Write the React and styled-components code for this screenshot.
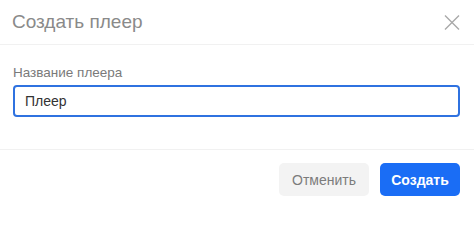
import React from "react";
import styled, { createGlobalStyle } from "styled-components";

const Global = createGlobalStyle`
  html, body { margin: 0; padding: 0; background: #fff; }
  body { font-family: "Liberation Sans", Arial, sans-serif; }
`;

const Dialog = styled.div`
  width: 474px;
  height: 208px;
  background: #fff;
  display: flex;
  flex-direction: column;
`;

const Header = styled.div`
  height: 45px;
  box-sizing: border-box;
  display: flex;
  align-items: center;
  justify-content: space-between;
  padding: 0 14px 0 12px;
  border-bottom: 1px solid #f1f1f1;
`;

const Title = styled.h2`
  margin: 0;
  font-size: 19px;
  font-weight: 400;
  color: #8a8a8a;
`;

const CloseButton = styled.button`
  border: 0;
  background: none;
  padding: 0;
  width: 16px;
  height: 16px;
  display: flex;
  align-items: center;
  justify-content: center;
  cursor: pointer;
  margin-top: 1px;
`;

const Body = styled.div`
  padding: 19px 14px 0 13px;
  height: 105px;
  box-sizing: border-box;
  border-bottom: 1px solid #f1f1f1;
`;

const Label = styled.label`
  display: block;
  font-size: 13.5px;
  line-height: 18px;
  color: #7a7a7a;
  margin-bottom: 3px;
`;

const Input = styled.input`
  display: block;
  width: 100%;
  height: 32px;
  box-sizing: border-box;
  border: 2px solid #2f72e0;
  border-radius: 4px;
  padding: 0 10px;
  font-family: inherit;
  font-size: 14px;
  color: #333;
  outline: none;
`;

const Footer = styled.div`
  flex: 1;
  display: flex;
  justify-content: flex-end;
  align-items: flex-start;
  gap: 11px;
  padding: 13px 14px 0 0;
`;

const Button = styled.button`
  height: 33px;
  width: ${(p) => (p.$primary ? "80px" : "90px")};
  padding: 0;
  border: 0;
  border-radius: 5px;
  font-family: inherit;
  font-size: 14px;
  font-weight: ${(p) => (p.$primary ? 700 : 400)};
  background: ${(p) => (p.$primary ? "#1a6df5" : "#f3f3f3")};
  color: ${(p) => (p.$primary ? "#fff" : "#7c7c7c")};
  cursor: pointer;
`;

export default function App() {
  return (
    <>
      <Global />
      <Dialog>
        <Header>
          <Title>Создать плеер</Title>
          <CloseButton aria-label="close">
            <svg width="16" height="15" viewBox="0 0 16 15">
              <path d="M1 0.5 L15 14.5 M15 0.5 L1 14.5" stroke="#a9a9a9" strokeWidth="1.4" fill="none" />
            </svg>
          </CloseButton>
        </Header>
        <Body>
          <Label>Название плеера</Label>
          <Input defaultValue="Плеер" />
        </Body>
        <Footer>
          <Button>Отменить</Button>
          <Button $primary>Создать</Button>
        </Footer>
      </Dialog>
    </>
  );
}
